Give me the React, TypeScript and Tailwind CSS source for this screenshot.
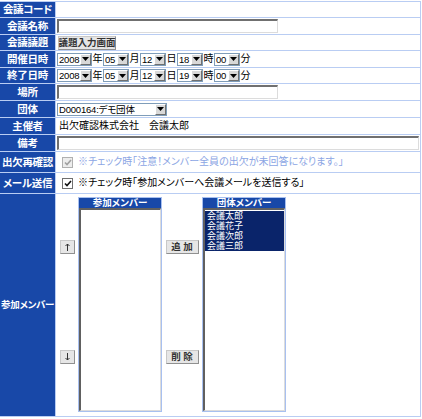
import React from 'react';

const Label = ({ children, h, size = 'text-[10.5px]' }: { children: React.ReactNode; h: string; size?: string }) => (
    <div className={`w-[55px] shrink-0 bg-[#1848a8] text-white font-bold ${size} leading-none tracking-[-0.3px] flex items-center justify-center whitespace-nowrap ${h}`}>
        {children}
    </div>
);

const Arrow = () => (
    <div className="w-[11px] shrink-0 h-full bg-[#d8d8d8] border-t border-l border-white border-b border-r border-b-[#707070] border-r-[#707070] flex items-center justify-center">
        <svg width="7" height="4" viewBox="0 0 7 4"><path d="M0 0h7L3.5 4z" fill="#000" /></svg>
    </div>
);

const Select = ({ value, w }: { value: string; w: string }) => (
    <div className={`${w} h-[13px] bg-white border border-[#7f9db9] flex items-stretch`}>
        <div className="flex-1 min-w-0 pl-[1px] text-[9.5px] leading-[11px] tracking-[-0.2px] whitespace-nowrap">{value}</div>
        <Arrow />
    </div>
);

const TextInput = ({ w }: { w: string }) => (
    <div className={`${w} h-[14px] bg-white border-t-2 border-l-2 border-[#707070] border-b border-r border-b-[#dcdcdc] border-r-[#dcdcdc]`} />
);

const Button = ({ children, w }: { children: React.ReactNode; w: string }) => (
    <div className={`${w} h-[14px] bg-[#e6e6e6] border border-[#c8c8c8] border-b-[#909090] border-r-[#909090] text-[9.5px] leading-[12px] font-bold text-[#333] flex items-center justify-center whitespace-nowrap`}>
        {children}
    </div>
);

const Check = ({ disabled }: { disabled?: boolean }) => (
    <div className={`w-[11px] h-[11px] shrink-0 border ${disabled ? 'border-[#b0b0b0] bg-[#ededed]' : 'border-[#707070] bg-white'} flex items-center justify-center`}>
        <svg width="8" height="7" viewBox="0 0 8 7">
            <path d="M1 3.5l2 2 4-4.5" fill="none" stroke={disabled ? '#a0a0a0' : '#111'} strokeWidth="1.6" />
        </svg>
    </div>
);

const UpDown = ({ down }: { down?: boolean }) => (
    <svg width="5" height="8" viewBox="0 0 5 8" className={down ? 'rotate-180' : ''}>
        <path d="M2.5 1v7M0.5 3L2.5 1 4.5 3" fill="none" stroke="#333" strokeWidth="1" />
    </svg>
);

const Row = ({ label, h, children }: { label: React.ReactNode; h: string; children?: React.ReactNode }) => (
    <div className="flex gap-px">
        <Label h={h}>{label}</Label>
        <div className={`flex-1 bg-white flex items-center pl-[1px] ${h}`}>{children}</div>
    </div>
);

const DatePart = ({ value, unit, w = 'w-[26px]' }: { value: string; unit: string; w?: string }) => (
    <>
        <Select value={value} w={w} />
        <span className="text-[10px] leading-none w-[11px] text-center">{unit}</span>
    </>
);

const members = ['会議太郎', '会議花子', '会議次郎', '会議三郎'];

export default function App() {
    return (
        <div className="w-[422px] h-[419px] bg-white pt-[1px] font-['Liberation_Sans','Noto_Sans_CJK_JP',sans-serif] [font-feature-settings:'palt'] text-black">
            <div className="w-[421px] bg-[#b9cdf3] flex flex-col gap-px border-t border-r border-b border-[#b9cdf3]">
                <Row label="会議コード" h="h-[15px]" />
                <Row label="会議名称" h="h-[16px]">
                    <TextInput w="w-[221px]" />
                </Row>
                <Row label="会議議題" h="h-[15px]">
                    <div className="pl-[1px]"><Button w="w-[58px]">議題入力画面</Button></div>
                </Row>
                <Row label="開催日時" h="h-[16px]">
                    <DatePart value="2008" unit="年" w="w-[35px]" />
                    <DatePart value="05" unit="月" />
                    <DatePart value="12" unit="日" />
                    <DatePart value="18" unit="時" />
                    <DatePart value="00" unit="分" />
                </Row>
                <Row label="終了日時" h="h-[15px]">
                    <DatePart value="2008" unit="年" w="w-[35px]" />
                    <DatePart value="05" unit="月" />
                    <DatePart value="12" unit="日" />
                    <DatePart value="19" unit="時" />
                    <DatePart value="00" unit="分" />
                </Row>
                <Row label="場所" h="h-[16px]">
                    <TextInput w="w-[221px]" />
                </Row>
                <Row label="団体" h="h-[16px]">
                    <Select value="D000164:デモ団体" w="w-[110px]" />
                </Row>
                <Row label="主催者" h="h-[16px]">
                    <span className="pl-[2px] text-[10px] leading-none whitespace-nowrap">出欠確認株式会社　会議太郎</span>
                </Row>
                <Row label="備考" h="h-[16px]">
                    <TextInput w="w-[362px]" />
                </Row>
                <Row label="出欠再確認" h="h-[20px]">
                    <div className="pl-[5px] flex items-center gap-[5px]">
                        <Check disabled />
                        <span className="text-[10px] leading-none text-[#8ca6e4] whitespace-nowrap">※チェック時「注意！メンバー全員の出欠が未回答になります。」</span>
                    </div>
                </Row>
                <Row label="メール送信" h="h-[20px]">
                    <div className="pl-[5px] flex items-center gap-[5px]">
                        <Check />
                        <span className="text-[10px] leading-none whitespace-nowrap">※チェック時「参加メンバーへ会議メールを送信する」</span>
                    </div>
                </Row>
                <div className="flex gap-px">
                    <Label h="h-[222px]" size="text-[9.5px]">参加メンバー</Label>
                    <div className="flex-1 bg-white h-[222px] flex items-start pt-[3px] pl-[4px]">
                        <div className="w-[16px] h-[214px] flex flex-col justify-between pt-[43px] pb-[47px] mr-[2px]">
                            <Button w="w-[15px]"><UpDown /></Button>
                            <Button w="w-[15px]"><UpDown down /></Button>
                        </div>
                        <div className="w-[84px] flex flex-col border border-[#a8c0f0]">
                            <div className="h-[10px] bg-[#1848a8] text-white text-[9.5px] font-bold leading-none flex items-center justify-center">参加メンバー</div>
                            <div className="h-[203px] bg-white border-t-2 border-l-2 border-[#606060] border-b border-r border-b-[#dcdcdc] border-r-[#dcdcdc]" />
                        </div>
                        <div className="w-[40px] h-[214px] flex flex-col justify-between items-center pt-[43px] pb-[47px]">
                            <Button w="w-[33px]">追 加</Button>
                            <Button w="w-[33px]">削 除</Button>
                        </div>
                        <div className="w-[84px] flex flex-col border border-[#a8c0f0]">
                            <div className="h-[10px] bg-[#1848a8] text-white text-[9.5px] font-bold leading-none flex items-center justify-center">団体メンバー</div>
                            <div className="h-[203px] bg-white border-t-2 border-l-2 border-[#606060] border-b border-r border-b-[#dcdcdc] border-r-[#dcdcdc] pt-[1px]">
                                {members.map((m) => (
                                    <div key={m} className="h-[10px] overflow-hidden bg-[#0a246a] text-white text-[9px] leading-[10px] pl-[2px]">{m}</div>
                                ))}
                            </div>
                        </div>
                    </div>
                </div>
            </div>
        </div>
    );
}
